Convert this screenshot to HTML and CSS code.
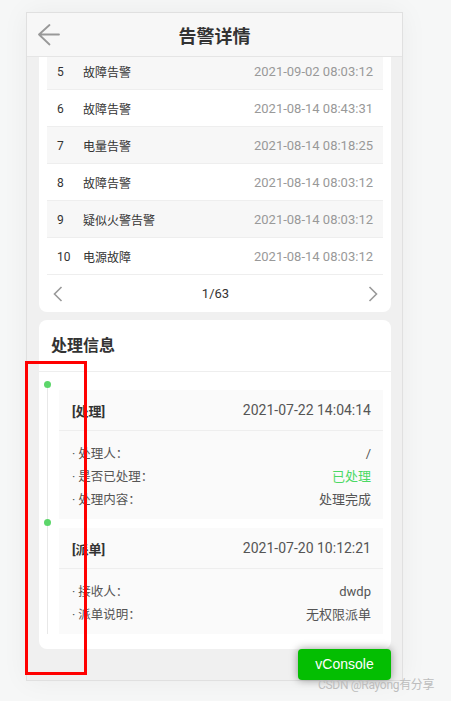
FILE: index.html
```html
<!doctype html>
<html>
    <head>
        <meta charset='utf-8'>
        <title>告警详情</title>
        <link rel="stylesheet" href="styles.css">
    </head>
    <body>
        <div class='phone'>
            <div class='nav'>
                <span class='nav-back'>
                    <svg width='24' height='24' viewBox='0 0 24 24'><path d='M2 11.5L12.5 2M2 11.5L12.5 21.5M2 11.5H22' fill='none' stroke='#999' stroke-width='1.8' stroke-linecap='round'/></svg>
                </span>
                <h1 class='nav-title'>告警详情</h1>
                <span></span>
            </div>
            <div class='page'>
                <div class='scroll'>
                    <div class='card list-card'>
                        <ul class='alarm-list'>
                            <li class='alarm-row'><span class='no'>5</span><span class='name'>故障告警</span><span class='time'>2021-09-02 08:03:12</span></li>
                            <li class='alarm-row'><span class='no'>6</span><span class='name'>故障告警</span><span class='time'>2021-08-14 08:43:31</span></li>
                            <li class='alarm-row'><span class='no'>7</span><span class='name'>电量告警</span><span class='time'>2021-08-14 08:18:25</span></li>
                            <li class='alarm-row'><span class='no'>8</span><span class='name'>故障告警</span><span class='time'>2021-08-14 08:03:12</span></li>
                            <li class='alarm-row'><span class='no'>9</span><span class='name'>疑似火警告警</span><span class='time'>2021-08-14 08:03:12</span></li>
                            <li class='alarm-row'><span class='no'>10</span><span class='name'>电源故障</span><span class='time'>2021-08-14 08:03:12</span></li>
                        </ul>
                        <div class='pager'>
                            <svg width='10' height='16' viewBox='0 0 10 16'><path d='M8.5 1L1.5 8L8.5 15' fill='none' stroke='#999' stroke-width='1.6'/></svg>
                            <span>1/63</span>
                            <svg width='10' height='16' viewBox='0 0 10 16'><path d='M1.5 1L8.5 8L1.5 15' fill='none' stroke='#999' stroke-width='1.6'/></svg>
                        </div>
                    </div>

                    <div class='card deal-card'>
                        <h3 class='card-title'>处理信息</h3>
                        <div class='timeline'>
                            <div class='tl-item'>
                                <i class='tl-dot'></i>
                                <div class='tl-box'>
                                    <div class='tl-head'><b>[处理]</b><span>2021-07-22 14:04:14</span></div>
                                    <ul class='tl-info'>
                                        <li><span class='label'>· 处理人：</span><span>/</span></li>
                                        <li><span class='label'>· 是否已处理：</span><span class='ok'>已处理</span></li>
                                        <li><span class='label'>· 处理内容：</span><span>处理完成</span></li>
                                    </ul>
                                </div>
                            </div>
                            <div class='tl-item'>
                                <i class='tl-dot'></i>
                                <div class='tl-box'>
                                    <div class='tl-head'><b>[派单]</b><span>2021-07-20 10:12:21</span></div>
                                    <ul class='tl-info'>
                                        <li><span class='label'>· 接收人：</span><span>dwdp</span></li>
                                        <li><span class='label'>· 派单说明：</span><span>无权限派单</span></li>
                                    </ul>
                                </div>
                            </div>
                        </div>
                    </div>
                </div>
            </div>
        </div>

        <div class='mark-box'></div>
        <div class='vconsole'>vConsole</div>
        <div class='watermark'>CSDN @Rayong有分享</div>
    </body>
</html>
```

FILE: styles.css
```css
html,body,ul,li,p,h1,h2,h3 {
    padding:0;
    margin:0;
}
ul,li {
    list-style:none;
}
body {
    position:relative;
    height:701px;
    padding:12px 0 0 26px;
    box-sizing:border-box;
    background:#f6f7f7;
    font-family:Roboto,'Noto Sans CJK SC',sans-serif;
    font-size:13px;
    color:#333;
    overflow:hidden;
}
.phone {
    width:377px;
    height:669px;
    box-sizing:border-box;
    border:1px solid #e0e0e0;
    background:#f0f0f0;
    display:flex;
    flex-direction:column;
    box-shadow:0 0 26px rgba(0, 0, 0, 0.05);
}
.nav {
    flex:none;
    height:43px;
    display:grid;
    grid-template-columns:1fr auto 1fr;
    align-items:center;
    background:#f7f7f7;
    border-bottom:1px solid #e5e5e5;
}
.nav-back {
    padding-left:10px;
    height:24px;
}
.nav-title {
    font-size:18px;
    font-weight:bold;
    color:#333;
}
.page {
    flex:1;
    overflow:hidden;
    padding:0 11px 0 12px;
}
/* 列表已向上滚动了一点 */
.scroll {
    margin-top:-4px;
}
.card {
    background:#fff;
    border-radius:8px;
}
.list-card {
    padding:0 8px;
    border-radius:0 0 8px 8px;
}
.alarm-row {
    display:flex;
    align-items:center;
    height:36px;
    padding:1px 10px 0;
    box-sizing:border-box;
    height:37px;
    border-bottom:1px solid #eee;
    font-size:12px;
    color:#333;
}
.alarm-row:nth-child(odd) {
    background:#f7f7f7;
}
.alarm-row .no {
    width:26px;
}
.alarm-row .name {
    flex:1;
}
.alarm-row .time {
    color:#999;
    font-size:13px;
}
.pager {
    height:37px;
    display:flex;
    align-items:center;
    justify-content:space-between;
    padding:0 5px 0 6px;
    font-size:13px;
    color:#333;
}
.deal-card {
    margin-top:8px;
    padding-bottom:15px;
}
.card-title {
    height:51px;
    line-height:51px;
    padding-left:12px;
    font-size:16px;
    font-weight:bold;
    color:#333;
    border-bottom:1px solid #eee;
}
.timeline {
    position:relative;
    padding:9px 8px 0 20px;
}
.timeline:before {
    content:'';
    position:absolute;
    left:8px;
    top:13px;
    bottom:0;
    width:1px;
    background:#e8e8e8;
}
.tl-dot {
    position:relative;
    display:block;
    width:7px;
    height:7px;
    margin-left:-15px;
    border-radius:50%;
    background:#5cd66a;
}
.tl-box {
    margin-top:2px;
    background:#fafafa;
}
.tl-head {
    height:40px;
    display:flex;
    align-items:center;
    justify-content:space-between;
    padding:0 12px 0 13px;
    border-bottom:1px solid #eee;
    font-size:13px;
    color:#555;
}
.tl-head span {
    font-size:14px;
}
.tl-head b {
    color:#333;
}
.tl-info {
    padding:11px 12px 8px 13px;
}
.tl-info li {
    display:flex;
    justify-content:space-between;
    height:23px;
    line-height:23px;
    font-size:13px;
    color:#555;
}
.tl-info .label {
    font-size:12.5px;
}
.tl-info .ok {
    color:#4cd964;
}
/* 截图上的红框标注 */
.mark-box {
    position:absolute;
    left:25px;
    top:361px;
    width:62px;
    height:314px;
    box-sizing:border-box;
    border:3px solid #f00;
}
.vconsole {
    position:absolute;
    left:298px;
    top:649px;
    width:93px;
    height:31px;
    line-height:31px;
    text-align:center;
    border-radius:4px;
    background:#04be02;
    color:#fff;
    font-family:'Liberation Sans',Arial,sans-serif;
    font-size:14px;
    box-shadow:0 0 8px rgba(0, 0, 0, 0.4);
}
.watermark {
    position:absolute;
    left:318px;
    top:677px;
    font-size:12px;
    line-height:16px;
    letter-spacing:-0.3px;
    color:#bdbdbd;
    white-space:nowrap;
}
```
